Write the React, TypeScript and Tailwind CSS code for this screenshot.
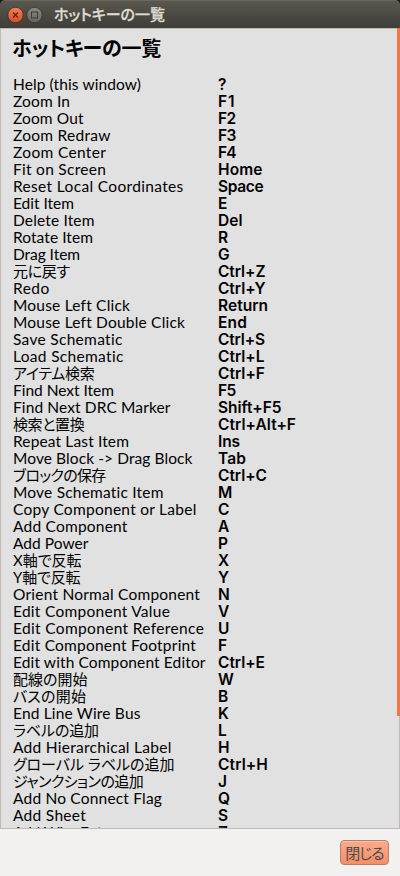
import { useLayoutEffect, useRef } from "react";

type Entry = [label: string, width: number, key: string, keyWidth: number];

const entries: Entry[] = [
  ["Help (this window)", 128.5, "?", 8],
  ["Zoom In", 57.5, "F1", 17],
  ["Zoom Out", 71, "F2", 18],
  ["Zoom Redraw", 98, "F3", 18],
  ["Zoom Center", 93.5, "F4", 18],
  ["Fit on Screen", 93.5, "Home", 44.5],
  ["Reset Local Coordinates", 171, "Space", 45.5],
  ["Edit Item", 61.5, "E", 9],
  ["Delete Item", 82, "Del", 24.5],
  ["Rotate Item", 80.5, "R", 10],
  ["Drag Item", 67.5, "G", 11],
  ["元に戻す", 57.5, "Ctrl+Z", 47.5],
  ["Redo", 37, "Ctrl+Y", 47.5],
  ["Mouse Left Click", 117.5, "Return", 50],
  ["Mouse Left Double Click", 172.5, "End", 29],
  ["Save Schematic", 110, "Ctrl+S", 47],
  ["Load Schematic", 111, "Ctrl+L", 46.5],
  ["アイテム検索", 82, "Ctrl+F", 47],
  ["Find Next Item", 101.5, "F5", 18],
  ["Find Next DRC Marker", 158, "Shift+F5", 63.5],
  ["検索と置換", 72, "Ctrl+Alt+F", 78],
  ["Repeat Last Item", 116.5, "Ins", 22],
  ["Move Block -> Drag Block", 180, "Tab", 28],
  ["ブロックの保存", 93.5, "Ctrl+C", 49],
  ["Move Schematic Item", 151, "M", 13],
  ["Copy Component or Label", 184, "C", 11],
  ["Add Component", 115, "A", 10],
  ["Add Power", 76, "P", 9],
  ["X軸で反転", 69, "X", 10],
  ["Y軸で反転", 68, "Y", 10],
  ["Orient Normal Component", 187.5, "N", 11],
  ["Edit Component Value", 157.5, "V", 10],
  ["Edit Component Reference", 191.5, "U", 11],
  ["Edit Component Footprint", 183.5, "F", 9],
  ["Edit with Component Editor", 193, "Ctrl+E", 47],
  ["配線の開始", 75, "W", 14],
  ["バスの開始", 73.5, "B", 10],
  ["End Line Wire Bus", 128, "K", 10],
  ["ラベルの追加", 86.5, "L", 8],
  ["Add Hierarchical Label", 159, "H", 11],
  ["グローバル ラベルの追加", 162, "Ctrl+H", 50],
  ["ジャンクションの追加", 131, "J", 6],
  ["Add No Connect Flag", 149.5, "Q", 12],
  ["Add Sheet", 73.5, "S", 9],
  ["Add Wire Entry", 103, "Z", 10],
];

/* Spreads the letters of a text so that it fills the given width. */
function Fit({ text, width, className = "" }: { text: string; width: number; className?: string }) {
  const ref = useRef<HTMLSpanElement>(null);
  useLayoutEffect(() => {
    const el = ref.current;
    if (!el || text.length < 2) return;
    const apply = () => {
      el.style.letterSpacing = "0px";
      const natural = el.getBoundingClientRect().width;
      el.style.letterSpacing = `${(width - natural) / (text.length - 0.5)}px`;
    };
    apply();
    document.fonts.ready.then(apply);
  }, [text, width]);
  return (
    <span ref={ref} className={`inline-block whitespace-pre ${className}`}>
      {text}
    </span>
  );
}

export default function App() {
  return (
    <div className="flex h-[876px] w-[400px] flex-col overflow-hidden bg-[#1a1512] font-['Lato','Noto_Sans_CJK_JP',sans-serif] [font-feature-settings:'palt'] [font-variant-ligatures:none]">
      <header className="flex h-7 shrink-0 items-center rounded-t-[5px] border-t border-[#69665d] bg-linear-to-b from-[#5a574e] to-[#3e3d38] pl-[7px]">
        <svg width="36" height="18" viewBox="0 0 36 18" className="shrink-0">
          <defs>
            <linearGradient id="close" x1="0" y1="0" x2="0" y2="1">
              <stop offset="0" stopColor="#f4805a" />
              <stop offset="1" stopColor="#df4c1e" />
            </linearGradient>
            <linearGradient id="max" x1="0" y1="0" x2="0" y2="1">
              <stop offset="0" stopColor="#8b897f" />
              <stop offset="1" stopColor="#66645c" />
            </linearGradient>
          </defs>
          <circle cx="8.5" cy="9" r="7.7" fill="url(#close)" stroke="#35332e" strokeWidth="0.8" />
          <path d="M6 6.5l5 5M11 6.5l-5 5" stroke="#50291b" strokeWidth="1.3" fill="none" />
          <circle cx="27.5" cy="9" r="7.7" fill="url(#max)" stroke="#35332e" strokeWidth="0.8" />
          <rect x="24.5" y="6" width="6" height="6" fill="none" stroke="#3c3b37" strokeWidth="1" />
        </svg>
        <Fit text="ホットキーの一覧" width={111} className="-mt-px ml-[11px] text-[15px] leading-[20px] font-medium text-[#dfdbd2] [-webkit-text-stroke:0.3px_#dfdbd2]" />
      </header>

      <main className="flex h-[801px] shrink-0 border border-r-0 border-[#bfbab4] bg-[#e1e1e1] text-black">
        <div className="min-w-0 flex-1 overflow-hidden pl-[11px]">
          <h1 className="flex h-[47px] items-start pt-[6px] text-[20px] leading-[26px] font-bold">
            <Fit text="ホットキーの一覧" width={149} />
          </h1>
          <ul className="text-[15.5px]">
            {entries.map(([label, width, key, keyWidth]) => (
              <li key={label} className="flex h-[17px] items-center leading-[17px]">
                <div className="flex w-[206px] shrink-0 items-center pl-px">
                  <Fit text={label} width={width - 0.5} className={/[^ -~]/.test(label) ? "text-[15px]" : ""} />
                </div>
                <Fit text={key} width={keyWidth} className="font-['Inter',sans-serif] font-semibold" />
              </li>
            ))}
          </ul>
        </div>
        <div className="w-[3px] shrink-0 border-r border-[#bfbab4]">
          <div className="-mt-px h-[688px] w-[3px] bg-[#f07746]" />
        </div>
      </main>

      <footer className="flex min-h-0 flex-1 items-start justify-end bg-[#f2f1f0] pt-[11px] pr-[11px]">
        <button className="flex h-[25px] w-[49px] items-center justify-center rounded-[4px] border border-[#b97f68] bg-linear-to-b from-[#fbaa8a] to-[#f68f67] text-[15px] leading-[20px] text-[#4c4c4c] shadow-[inset_0_1px_0_#fcc0a8]">
          <Fit text="閉じる" width={39} />
        </button>
      </footer>
    </div>
  );
}
